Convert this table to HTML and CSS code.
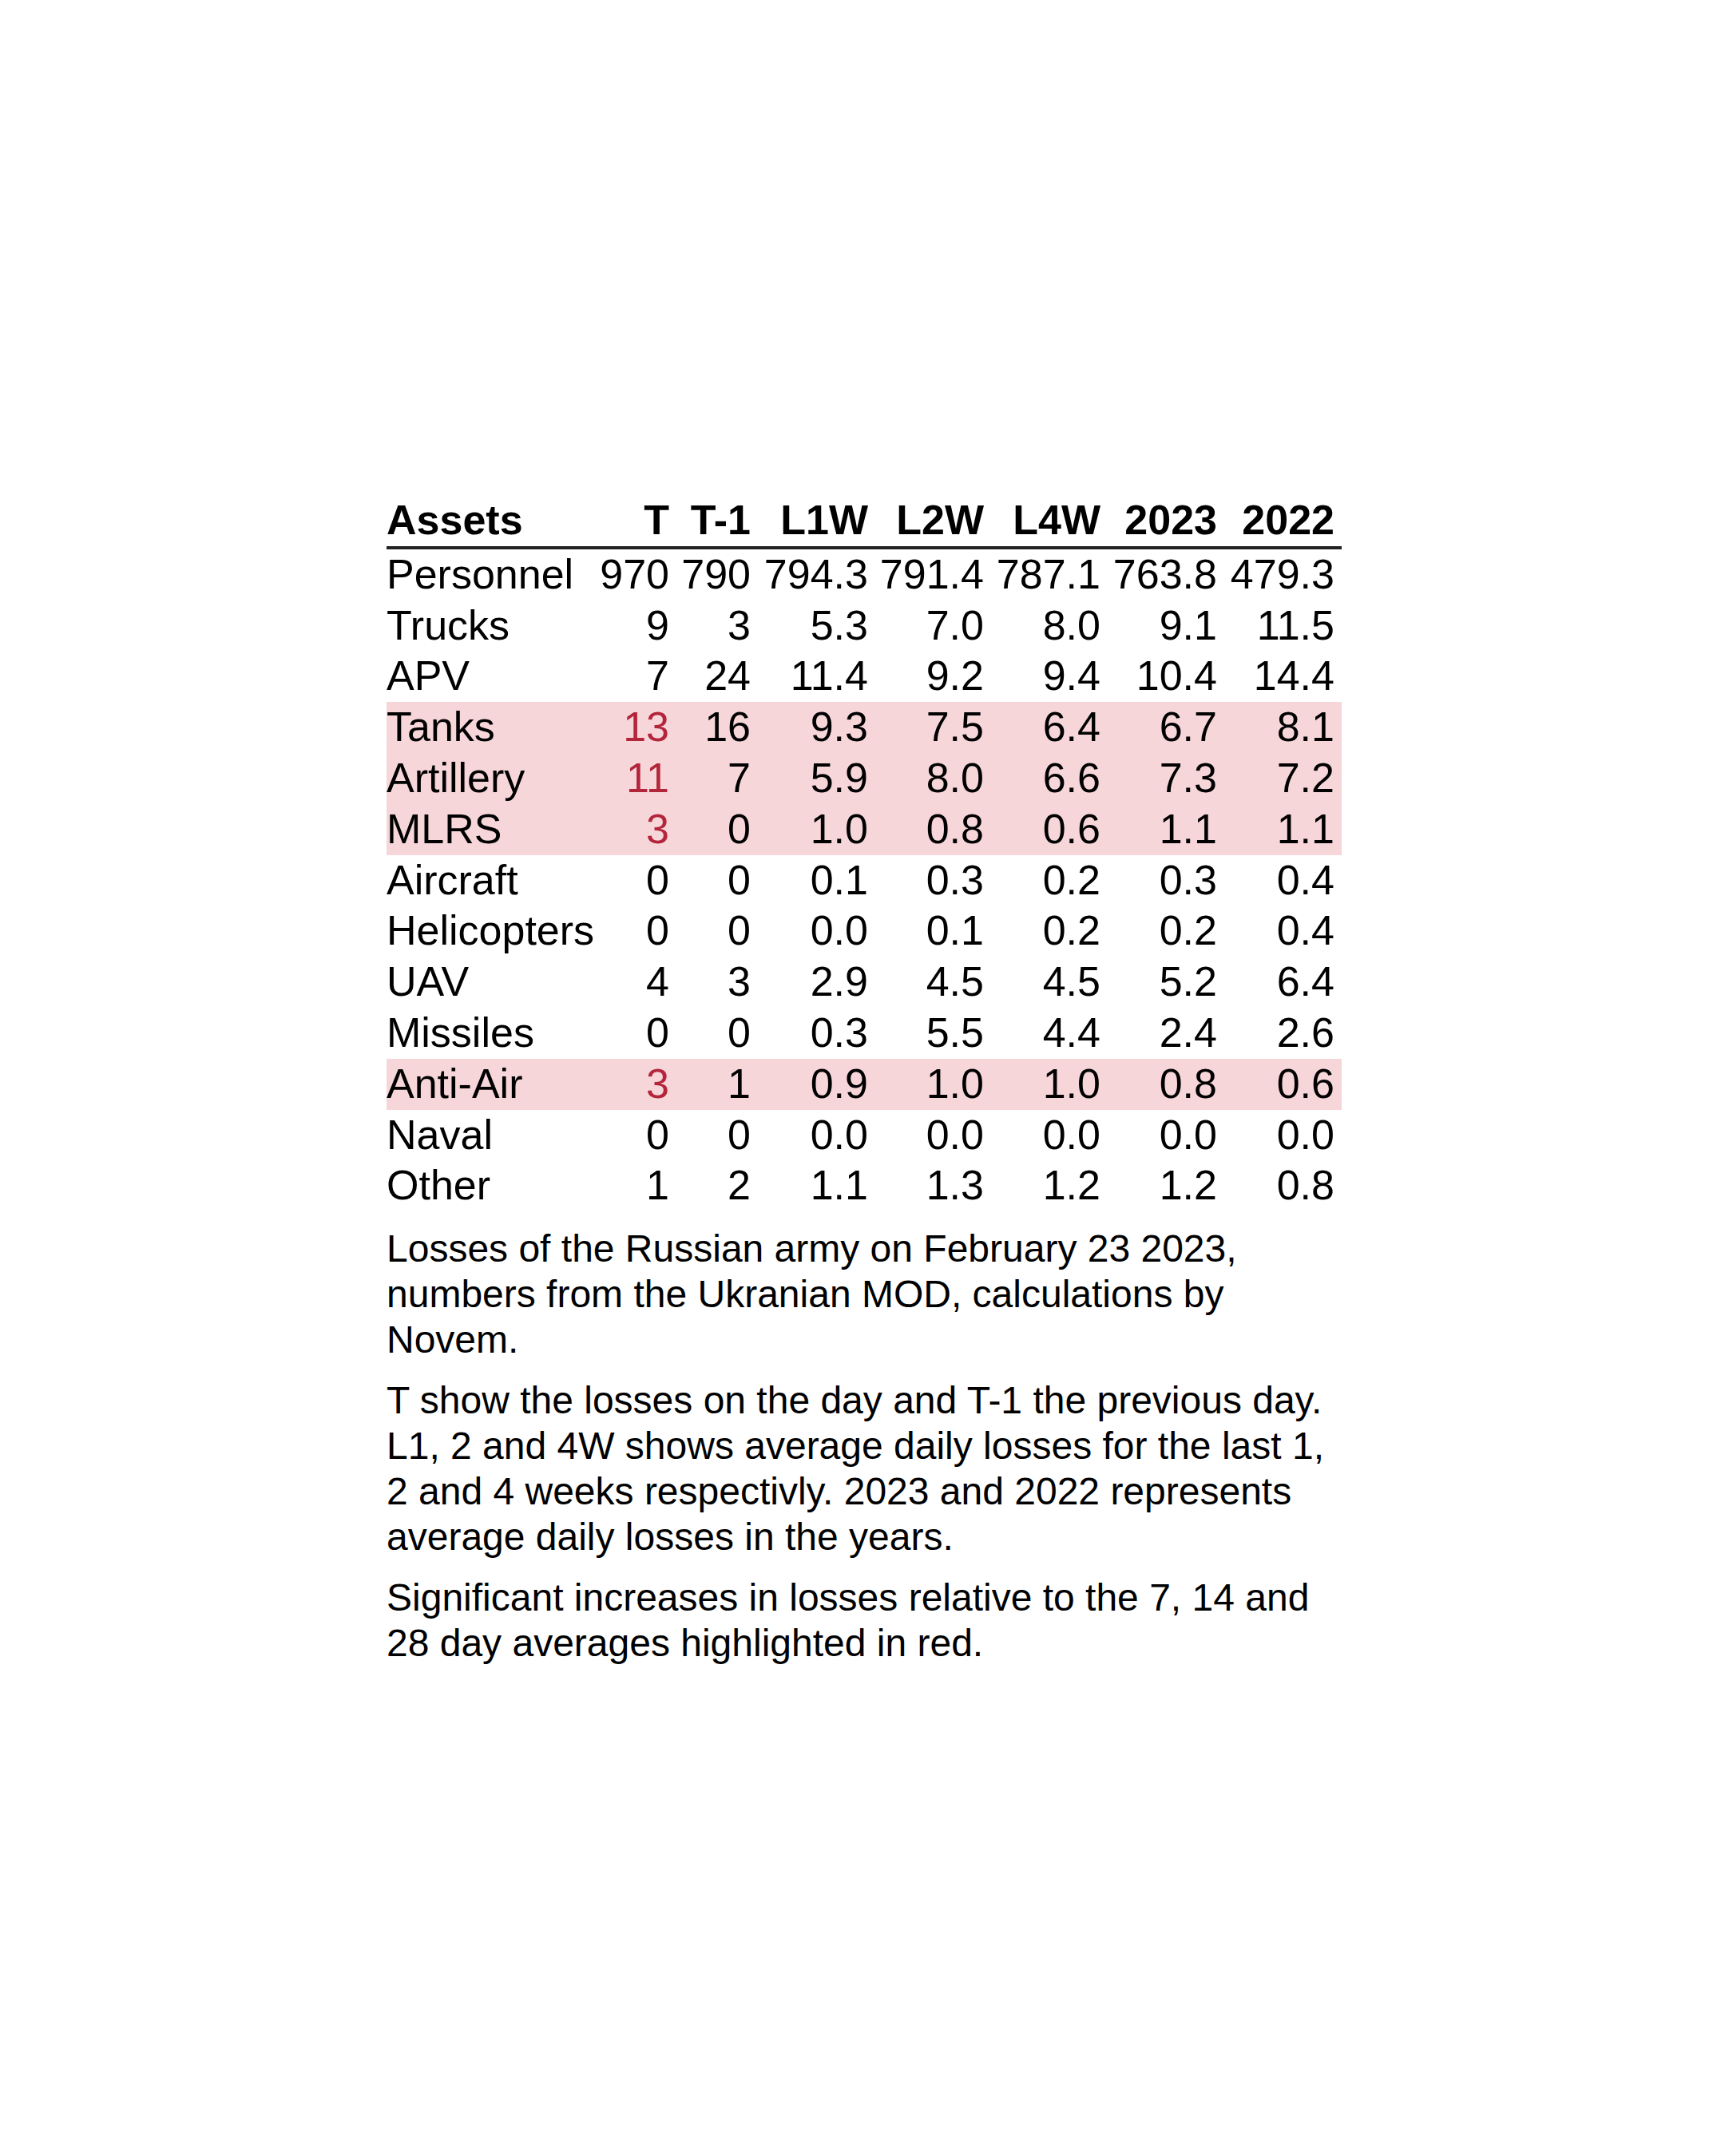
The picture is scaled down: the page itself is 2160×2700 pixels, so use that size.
FILE: index.html
```html
<!DOCTYPE html>
<html lang="en">
<head>
<meta charset="utf-8">
<title>Losses of the Russian army</title>
<link rel="stylesheet" href="styles.css">
</head>
<body>
<div class="page">
  <div class="report">
    <table class="losses">
      <colgroup>
        <col class="c-asset"><col class="c-t"><col class="c-t1"><col class="c-l1w"><col class="c-l2w"><col class="c-l4w"><col class="c-y23"><col class="c-y22">
      </colgroup>
      <thead>
        <tr><th class="name">Assets</th><th>T</th><th>T-1</th><th>L1W</th><th>L2W</th><th>L4W</th><th>2023</th><th>2022</th></tr>
      </thead>
      <tbody>
        <tr><td class="name">Personnel</td><td>970</td><td>790</td><td>794.3</td><td>791.4</td><td>787.1</td><td>763.8</td><td>479.3</td></tr>
        <tr><td class="name">Trucks</td><td>9</td><td>3</td><td>5.3</td><td>7.0</td><td>8.0</td><td>9.1</td><td>11.5</td></tr>
        <tr><td class="name">APV</td><td>7</td><td>24</td><td>11.4</td><td>9.2</td><td>9.4</td><td>10.4</td><td>14.4</td></tr>
        <tr class="hl"><td class="name">Tanks</td><td class="up">13</td><td>16</td><td>9.3</td><td>7.5</td><td>6.4</td><td>6.7</td><td>8.1</td></tr>
        <tr class="hl"><td class="name">Artillery</td><td class="up">11</td><td>7</td><td>5.9</td><td>8.0</td><td>6.6</td><td>7.3</td><td>7.2</td></tr>
        <tr class="hl"><td class="name">MLRS</td><td class="up">3</td><td>0</td><td>1.0</td><td>0.8</td><td>0.6</td><td>1.1</td><td>1.1</td></tr>
        <tr><td class="name">Aircraft</td><td>0</td><td>0</td><td>0.1</td><td>0.3</td><td>0.2</td><td>0.3</td><td>0.4</td></tr>
        <tr><td class="name">Helicopters</td><td>0</td><td>0</td><td>0.0</td><td>0.1</td><td>0.2</td><td>0.2</td><td>0.4</td></tr>
        <tr><td class="name">UAV</td><td>4</td><td>3</td><td>2.9</td><td>4.5</td><td>4.5</td><td>5.2</td><td>6.4</td></tr>
        <tr><td class="name">Missiles</td><td>0</td><td>0</td><td>0.3</td><td>5.5</td><td>4.4</td><td>2.4</td><td>2.6</td></tr>
        <tr class="hl"><td class="name">Anti-Air</td><td class="up">3</td><td>1</td><td>0.9</td><td>1.0</td><td>1.0</td><td>0.8</td><td>0.6</td></tr>
        <tr><td class="name">Naval</td><td>0</td><td>0</td><td>0.0</td><td>0.0</td><td>0.0</td><td>0.0</td><td>0.0</td></tr>
        <tr><td class="name">Other</td><td>1</td><td>2</td><td>1.1</td><td>1.3</td><td>1.2</td><td>1.2</td><td>0.8</td></tr>
      </tbody>
    </table>
    <div class="notes">
      <p>Losses of the Russian army on February 23 2023, numbers from the Ukranian MOD, calculations by Novem.</p>
      <p>T show the losses on the day and T-1 the previous day. L1, 2 and 4W shows average daily losses for the last 1, 2 and 4 weeks respectivly. 2023 and 2022 represents average daily losses in the years.</p>
      <p>Significant increases in losses relative to the 7, 14 and 28 day averages highlighted in red.</p>
    </div>
  </div>
</div>
</body>
</html>
```

FILE: styles.css
```css
html, body {
  margin: 0;
  padding: 0;
  background: #ffffff;
}

.page {
  padding: 620px 0 0 484px;
  font-family: "Liberation Sans", Arial, sans-serif;
  color: #000000;
}

.report {
  width: 1196px;
}

.losses {
  width: 1196px;
  table-layout: fixed;
  border-collapse: collapse;
  border-spacing: 0;
  font-size: 52px;
  line-height: 58px;
}

.c-asset { width: 266px; }
.c-t { width: 97px; }
.c-t1 { width: 102px; }
.c-l1w { width: 147px; }
.c-l2w { width: 145px; }
.c-l4w { width: 146px; }
.c-y23 { width: 146px; }
.c-y22 { width: 147px; }

.losses th,
.losses td {
  padding: 2px 9px 3.8px 0;
  text-align: right;
  white-space: nowrap;
  vertical-align: top;
}

.losses th {
  font-weight: bold;
  border-bottom: 4px solid #222222;
}

.losses .name {
  text-align: left;
}

.losses tr.hl td {
  background: #f7d6da;
}

.losses td.up {
  color: #b3253a;
}

.notes {
  margin-top: 18px;
  font-size: 48px;
  line-height: 57px;
}

.notes p {
  margin: 0 0 19px 0;
}
```
